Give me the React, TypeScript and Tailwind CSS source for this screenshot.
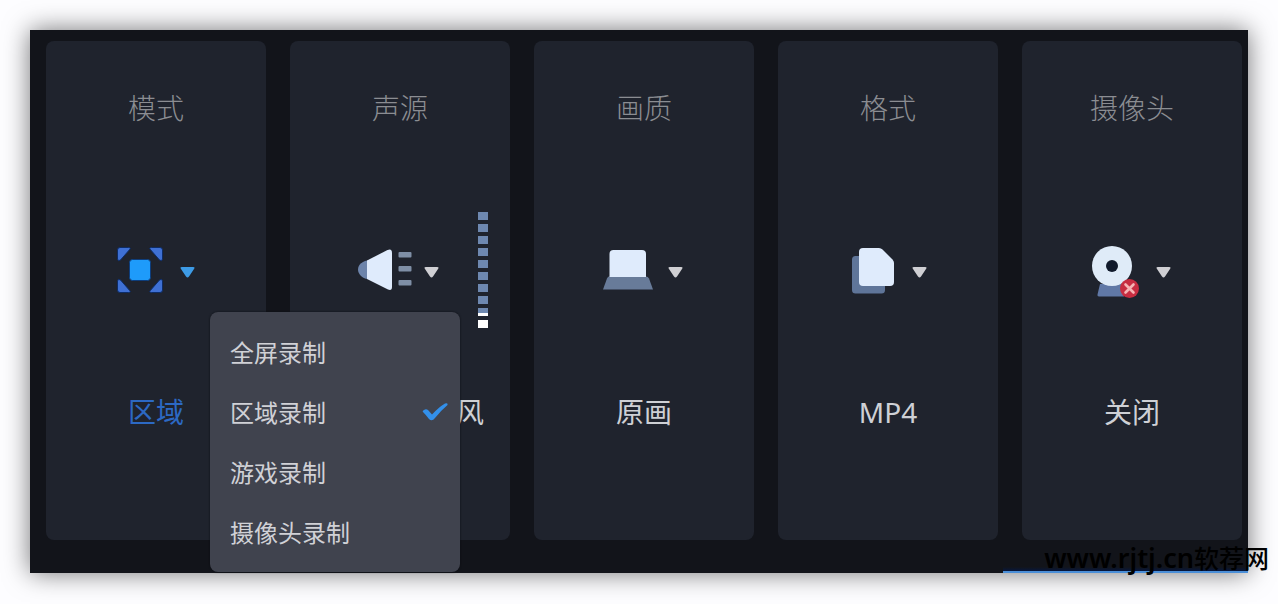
import { useState } from 'react';
import type { ReactNode } from 'react';
import clsx from 'clsx';

const MODES = ['全屏录制', '区域录制', '游戏录制', '摄像头录制'];

function RegionIcon() {
  return (
    <svg viewBox="0 0 56 64" className="h-16 w-14" aria-hidden="true">
      <g fill="#3f70d4" stroke="#0d2c66" strokeWidth="1">
        <path d="M6 9.500h8.500q3 0 1 2.200L6.500 22Q4 24 3.500 21V12q0-2.500 2.500-2.500z" />
        <path d="M46 9.500h-8.500q-3 0-1 2.200L45.500 22q2.500 2 3-1V12q0-2.500-2.500-2.500z" />
        <path d="M6 54.500h8.500q3 0 1-2.200L6.500 42Q4 40 3.500 43v9q0 2.500 2.500 2.500z" />
        <path d="M46 54.500h-8.500q-3 0-1-2.200L45.500 42q2.500-2 3 1v9q0 2.500-2.500 2.500z" />
      </g>
      <rect x="15.500" y="21.500" width="21" height="21" rx="3" fill="#1e9bfa" stroke="#0d3d7c" strokeWidth="1" />
    </svg>
  );
}

function SpeakerIcon() {
  return (
    <svg viewBox="0 0 56 64" className="h-16 w-14" aria-hidden="true">
      <path d="M10 22.500C4 23 0 27 0 31.500S4 40.500 10 41z" fill="#6d84ab" />
      <path d="M9 22.500 29.500 12q4.500-2 4.500 3v34q0 4-4 2.500L9 41z" fill="#dfebfc" />
      <g fill="#7f8fa6">
        <rect x="40.500" y="14" width="13" height="5.500" rx="1" />
        <rect x="40.500" y="28" width="13" height="5.500" rx="1" />
        <rect x="40.500" y="42" width="13" height="5.500" rx="1" />
      </g>
    </svg>
  );
}

function LaptopIcon() {
  return (
    <svg viewBox="0 0 56 64" className="h-16 w-14" aria-hidden="true">
      <path d="M7 38.500h37q2 0 3 2l4 11H1l4-11q1-2 2-2z" fill="#687b99" />
      <path d="M11.500 12h28.500q4 0 4 4v23H7.500V16q0-4 4-4z" fill="#dfebfc" />
    </svg>
  );
}

function FilesIcon() {
  return (
    <svg viewBox="0 0 56 64" className="h-16 w-14" aria-hidden="true">
      <rect x="6" y="18" width="33" height="37.500" rx="3.500" fill="#5f7599" />
      <path d="M17 10h16q2 0 3.500 1.500L46.500 21.500Q48 23 48 25v19q0 4-4 4H17q-4 0-4-4V14q0-4 4-4z" fill="#dfebfc" />
    </svg>
  );
}

function WebcamIcon() {
  return (
    <svg viewBox="0 0 56 64" className="h-16 w-14" aria-hidden="true">
      <path d="M10 46h24v12.500H9q-2 0-1.500-2z" fill="#6078a6" />
      <circle cx="22" cy="28" r="20" fill="#dfebf8" />
      <circle cx="22" cy="28" r="6" fill="#111a2c" />
      <circle cx="39.500" cy="50.500" r="9.500" fill="#c72d41" />
      <path d="m35.500 46.500 8 8m0-8-8 8" stroke="#f5b4b4" strokeWidth="2.600" strokeLinecap="round" />
    </svg>
  );
}

function Caret({ active = false }: { active?: boolean }) {
  return (
    <svg
      viewBox="0 0 18 64"
      className={clsx('h-16 w-[18px]', active ? 'text-[#3d9be6]' : 'text-[#cfcfd3]')}
      aria-hidden="true"
    >
      <path d="M2 29h11q2.500 0 1 2l-5 7.500q-1.500 2-3 0L1 31q-1.500-2 1-2z" fill="currentColor" />
    </svg>
  );
}

/** Vertical input level, filled from the bottom up. */
function LevelMeter() {
  return (
    <div className="flex w-[10px] flex-col gap-1" role="img" aria-label="音量">
      {Array.from({ length: 8 }, (_, i) => (
        <span key={i} className="h-2 bg-[#6e88b0]" />
      ))}
      <span className="h-2 border-b-3 border-white bg-[#6e88b0]" />
      <span className="h-2 bg-white" />
    </div>
  );
}

interface OptionCardProps {
  label: string;
  value: string;
  icon: ReactNode;
  active?: boolean;
  alignEnd?: boolean;
  meter?: ReactNode;
  menu?: ReactNode;
  onToggle?: () => void;
}

function OptionCard({ label, value, icon, active, alignEnd, meter, menu, onToggle }: OptionCardProps) {
  return (
    <section className="flex min-w-0 flex-1 flex-col rounded-lg bg-[#1f232d] pt-[47px] pb-[108px]">
      <h2 className="text-center text-[28px] leading-10 font-light text-[#8b8d92]">{label}</h2>
      <div className="mt-[110px] grid grid-cols-[1fr_84px_1fr] grid-rows-[64px] items-center">
        <div className="relative col-start-2">
          <button type="button" aria-label={label} onClick={onToggle} className="flex cursor-pointer gap-[10px]">
            {icon}
            <Caret active={active} />
          </button>
          {menu}
        </div>
        {meter && <div className="flex h-16 items-center justify-end pr-[22px]">{meter}</div>}
      </div>
      <p
        className={clsx(
          'mt-[90px] text-[28px] leading-10',
          alignEnd ? 'pr-[26px] text-right' : 'text-center',
          active ? 'text-[#2c69c4]' : 'text-[#ced0d5]',
        )}
      >
        {value}
      </p>
    </section>
  );
}

function ModeMenu({ selected, onSelect }: { selected: string; onSelect: (mode: string) => void }) {
  return (
    <div
      role="menu"
      className="absolute top-[74px] left-24 z-10 w-[250px] rounded-lg bg-[#40434e] pt-[11px] pb-[9px] shadow-[0_0_2px_#0a0c12]"
    >
      {MODES.map((mode) => (
        <button
          key={mode}
          type="button"
          role="menuitemradio"
          aria-checked={mode === selected}
          onClick={() => onSelect(mode)}
          className="flex h-[60px] w-full cursor-pointer items-center justify-between pr-3 pl-5 text-2xl text-[#d0d1d6]"
        >
          {mode}
          {mode === selected && (
            <svg viewBox="0 0 26 20" className="h-5 w-[26px]" aria-hidden="true">
              <path d="M2 7q2-1.500 4 0l4 4.500Q17 4 23 .500q3-1 2.500 1.500-7 6-12.500 13-3 4-6 1-3-4-6-7-1-1 1-2z" fill="#3390ea" />
            </svg>
          )}
        </button>
      ))}
    </div>
  );
}

export default function App() {
  const [open, setOpen] = useState(true);
  const [mode, setMode] = useState('区域录制');

  return (
    <main className="relative min-h-screen bg-[#fdfdff] p-[30px] font-['Noto_Sans','Noto_Sans_CJK_SC',sans-serif]">
      <div className="relative flex gap-6 bg-[#12141a] pt-[11px] pr-[6px] pb-[33px] pl-4 shadow-[0_0_24px_rgba(0,0,0,0.55)]">
        <OptionCard
          label="模式"
          value={mode.replace('录制', '')}
          icon={<RegionIcon />}
          active
          onToggle={() => setOpen(!open)}
          menu={open && <ModeMenu selected={mode} onSelect={setMode} />}
        />
        <OptionCard label="声源" value="风" icon={<SpeakerIcon />} alignEnd meter={<LevelMeter />} />
        <OptionCard label="画质" value="原画" icon={<LaptopIcon />} />
        <OptionCard label="格式" value="MP4" icon={<FilesIcon />} />
        <OptionCard label="摄像头" value="关闭" icon={<WebcamIcon />} />
        <div className="absolute right-0 bottom-0 h-[6px] w-[245px] border-b-2 border-[#4b8fd8] bg-linear-to-b from-[#12141a] to-[#06163f]" />
      </div>
      <p className="absolute right-[9px] bottom-[28px] text-[25px] leading-9 font-medium text-black">
        <span className="text-[27px] font-semibold">www.rjtj.cn</span>软荐网
      </p>
    </main>
  );
}
